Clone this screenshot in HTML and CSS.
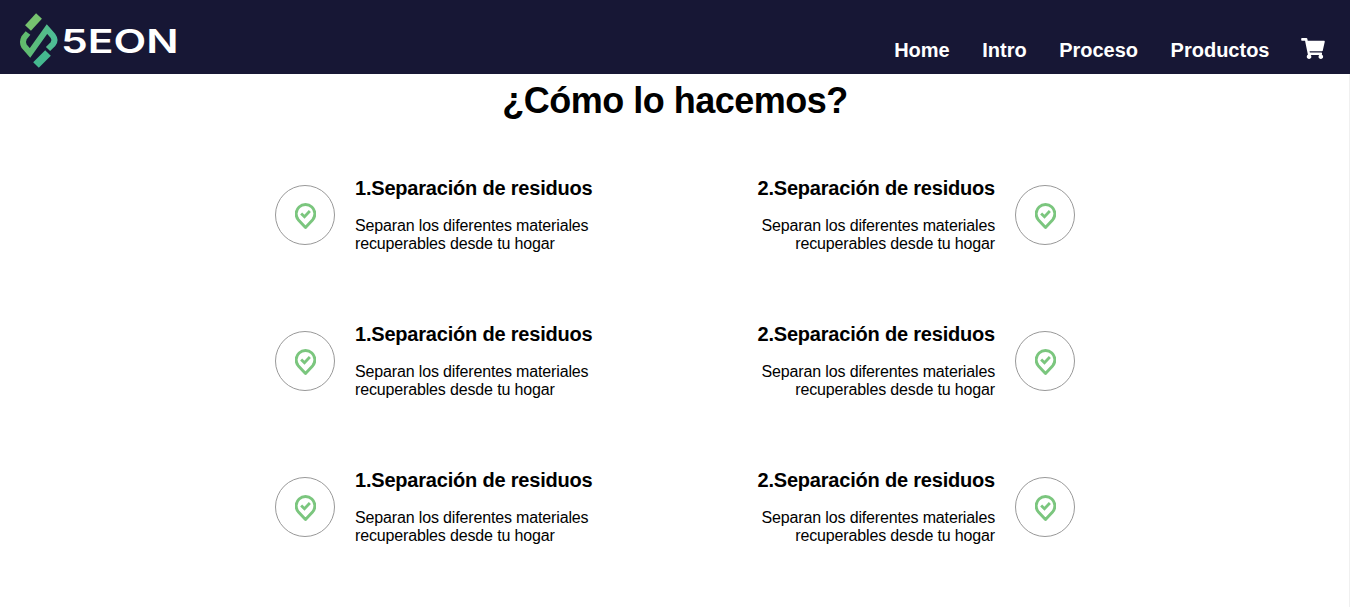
FILE: index.html
```html
<!DOCTYPE html>
<html lang="es">
<head>
    <meta charset="UTF-8">
    <meta name="viewport" content="width=device-width, initial-scale=1.0">
    <title>5EON</title>
    <link rel="stylesheet" href="styles.css">
</head>
<body>
    <svg class="icon-defs" width="0" height="0">
        <symbol id="pin-check" viewBox="0 0 20 26">
            <path d="M10 24.500 L3 17 A9 9 0 1 1 17 17 Z" fill="none" stroke="#7bc67e" stroke-width="2.800" stroke-linejoin="round"/>
            <path d="M5.800 11 L9 14.200 L14.200 8.600" fill="none" stroke="#7bc67e" stroke-width="2.700"/>
        </symbol>
        <linearGradient id="logo-green" x1="0" y1="0" x2="1" y2="0">
            <stop offset="0" stop-color="#62bb6c"/>
            <stop offset="1" stop-color="#4dbd96"/>
        </linearGradient>
    </svg>

    <header class="navbar">
        <a class="brand" href="#">
            <svg class="brand-mark" viewBox="0 0 50 62" width="50" height="62">
                <path d="M13 20 L24 8" stroke="#76c26f" stroke-width="8" fill="none"/>
                <path d="M13 25 L9 30 Q7 34 9 38 L15 45 L32 21 L38 28 Q41 32 38 36 L33 41" stroke="url(#logo-green)" stroke-width="6" fill="none"/>
                <path d="M21 57 L33 45" stroke="#45b98f" stroke-width="8" fill="none"/>
            </svg>
            <span class="brand-name">5EON</span>
        </a>
        <nav class="nav-links">
            <a href="#">Home</a>
            <a href="#">Intro</a>
            <a href="#">Proceso</a>
            <a href="#">Productos</a>
            <a href="#" class="cart-link">
                <svg viewBox="0 0 576 512" width="24" height="21"><path fill="#fff" d="M528 301l47-208c3-15-8-29-23-29H159l-9-45C148 8 138 0 126 0H24C11 0 0 11 0 24v16c0 13 11 24 24 24h70l70 343c-17 10-28 28-28 49 0 31 25 56 56 56s56-25 56-56c0-16-6-30-17-40h209c-11 10-17 24-17 40 0 31 25 56 56 56s56-25 56-56c0-22-13-41-32-50l5-24c4-15-8-29-23-29H211l-7-32h301c11 0 21-8 23-19z"/></svg>
            </a>
        </nav>
    </header>

    <main class="process">
        <h1>¿Cómo lo hacemos?</h1>
        <div class="steps">
            <div class="step">
                <div class="step-icon"><svg width="21" height="27"><use href="#pin-check"/></svg></div>
                <div class="step-text">
                    <h3>1.Separación de residuos</h3>
                    <p>Separan los diferentes materiales<br>recuperables desde tu hogar</p>
                </div>
            </div>
            <div class="step step-right">
                <div class="step-text">
                    <h3>2.Separación de residuos</h3>
                    <p>Separan los diferentes materiales<br>recuperables desde tu hogar</p>
                </div>
                <div class="step-icon"><svg width="21" height="27"><use href="#pin-check"/></svg></div>
            </div>
            <div class="step">
                <div class="step-icon"><svg width="21" height="27"><use href="#pin-check"/></svg></div>
                <div class="step-text">
                    <h3>1.Separación de residuos</h3>
                    <p>Separan los diferentes materiales<br>recuperables desde tu hogar</p>
                </div>
            </div>
            <div class="step step-right">
                <div class="step-text">
                    <h3>2.Separación de residuos</h3>
                    <p>Separan los diferentes materiales<br>recuperables desde tu hogar</p>
                </div>
                <div class="step-icon"><svg width="21" height="27"><use href="#pin-check"/></svg></div>
            </div>
            <div class="step">
                <div class="step-icon"><svg width="21" height="27"><use href="#pin-check"/></svg></div>
                <div class="step-text">
                    <h3>1.Separación de residuos</h3>
                    <p>Separan los diferentes materiales<br>recuperables desde tu hogar</p>
                </div>
            </div>
            <div class="step step-right">
                <div class="step-text">
                    <h3>2.Separación de residuos</h3>
                    <p>Separan los diferentes materiales<br>recuperables desde tu hogar</p>
                </div>
                <div class="step-icon"><svg width="21" height="27"><use href="#pin-check"/></svg></div>
            </div>
        </div>
    </main>
</body>
</html>
```

FILE: styles.css
```css
:root {
    --navy: #171735;
}

body {
    font-family: "Liberation Sans", Arial, sans-serif;
    background-color: white;
    color: #000;
    margin: 0;
}

.icon-defs {
    display: block;
    height: 0;
}

.navbar {
    display: flex;
    justify-content: space-between;
    height: 74px;
    background-color: var(--navy);
    padding: 0 25px 0 15px;
}

.brand {
    display: flex;
    align-items: flex-start;
    color: white;
    text-decoration: none;
    padding-top: 8px;
}

.brand-mark {
    display: block;
    margin-right: -4px;
}

.brand-name {
    display: inline-block;
    font-family: Inter, sans-serif;
    font-weight: 600;
    font-size: 33px;
    line-height: 40px;
    margin-top: 13px;
    transform: scaleX(1.29);
    transform-origin: left center;
}

.nav-links {
    display: flex;
    align-items: flex-end;
    gap: 32.5px;
    padding-bottom: 12px;
}

.nav-links a {
    color: white;
    font-size: 20px;
    font-weight: 700;
    line-height: 23px;
    text-decoration: none;
}

.nav-links .cart-link {
    margin-left: -1px;
}

.cart-link svg {
    display: block;
    margin-bottom: 3px;
}

.process {
    box-sizing: border-box;
    min-height: 533px;
    padding-top: 6px;
    box-shadow: inset -1px 0 0 #f0f0f0;
}

h1 {
    font-size: 36px;
    line-height: 41px;
    letter-spacing: -0.5px;
    margin: 0;
    text-align: center;
}

.steps {
    display: grid;
    grid-template-columns: 1fr 1fr;
    row-gap: 46px;
    width: 800px;
    margin: 44px auto 0;
}

.step {
    display: flex;
    align-items: center;
    gap: 20px;
    height: 100px;
}

.step-right {
    justify-content: flex-end;
    text-align: right;
}

.step-icon {
    display: flex;
    align-items: center;
    justify-content: center;
    box-sizing: border-box;
    width: 60px;
    height: 60px;
    border: 1px solid #999;
    border-radius: 50%;
    flex-shrink: 0;
}

.step-text h3 {
    font-size: 20px;
    line-height: 23px;
    letter-spacing: -0.2px;
    margin: 0 0 17px;
}

.step-text p {
    font-size: 16px;
    line-height: 18px;
    letter-spacing: -0.15px;
    margin: 0;
}
```
